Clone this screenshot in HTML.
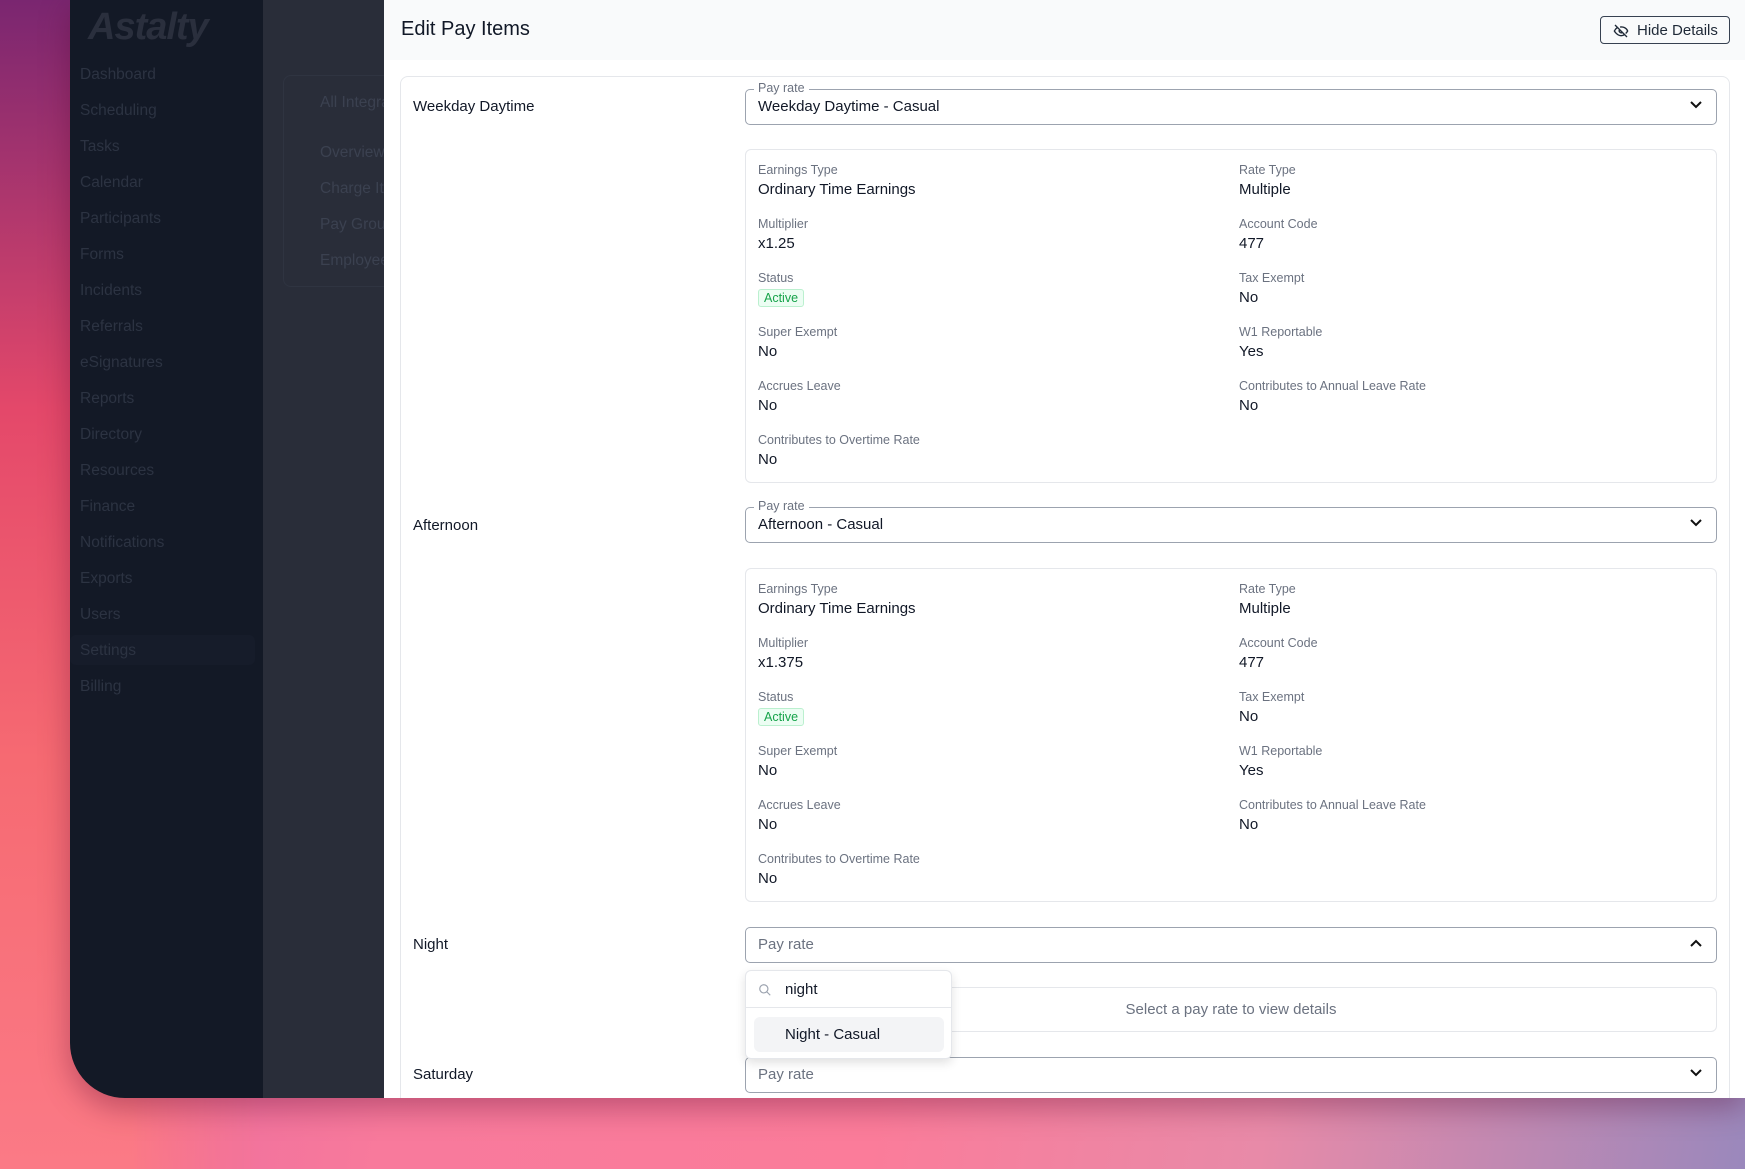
<!DOCTYPE html>
<html><head><meta charset="utf-8"><style>
*{box-sizing:border-box;margin:0;padding:0}
body{width:1745px;height:1169px;overflow:hidden;position:relative;font-family:"Liberation Sans",sans-serif;
background:linear-gradient(100deg,#e060a0 0%,#f87a9c 30%,#fb7c9a 55%,#e88aa8 75%,#9a88bc 100%)}
.bgl{position:absolute;left:0;top:0;width:260px;height:1169px;background:linear-gradient(180deg,#7a2670 0%,#e4486a 35%,#f66a72 65%,#fb7a86 100%);-webkit-mask-image:linear-gradient(to right,#000 50%,transparent);mask-image:linear-gradient(to right,#000 50%,transparent)}
.frame{position:absolute;left:70px;top:0;width:1675px;height:1098px;border-bottom-left-radius:55px;overflow:hidden;background:#131926;box-shadow:0 10px 30px rgba(80,0,40,.35)}
.sec{position:absolute;left:193px;top:0;width:121px;height:1098px;background:#292d39}
.nav{position:absolute;left:10px;color:#2c3342;font-size:15.5px}
.logo{position:absolute;left:18px;top:6px;font-size:38px;font-weight:bold;color:#2a2f3d;letter-spacing:-1px;font-style:italic}
.panel{position:absolute;left:384px;top:0;width:1361px;height:1098px;background:#fff;overflow:hidden}
.hdr{position:absolute;left:0;top:0;width:100%;height:60px;background:#f9fafb}
.title{position:absolute;left:17px;top:18px;font-size:20px;color:#111827}
.btn{position:absolute;left:1216px;top:16px;width:130px;height:28px;border:1px solid #374151;border-radius:4px;font-size:15px;color:#1f2937;padding:5px 0 0 36px}
.card{position:absolute;left:16px;top:76px;width:1330px;height:1040px;border:1px solid #e5e7eb;border-radius:8px}
.lbl{position:absolute;left:413px;font-size:15px;color:#111827}
.sel{position:absolute;left:745px;width:972px;height:36px;border:1px solid #9ca3af;border-radius:5px;font-size:15px;color:#111827;padding:8px 0 0 12px}
.sel .leg{position:absolute;left:8px;top:-9px;background:#fff;padding:0 4px;font-size:12.5px;color:#6b7280}
.ph{color:#6b7280}
.chev{position:absolute;right:14px;top:11px}
.det{position:absolute;left:745px;width:972px;border:1px solid #e5e7eb;border-radius:6px}
.f{position:absolute;font-size:12.5px;color:#6b7280}
.f div{font-size:15px;color:#111827;margin-top:4px}
.badge{display:inline-block;font-size:12.5px !important;color:#16a34a !important;background:#ecfdf3;border:1px solid #bbf0cf;border-radius:3px;padding:1px 5px}
.dd{position:absolute;left:745px;top:970px;width:207px;height:89px;background:#fff;border:1px solid #e5e7eb;border-radius:6px;box-shadow:0 4px 10px rgba(0,0,0,.12)}
</style></head><body>
<div class="bgl"></div>
<div class="frame">
<div class="logo">Astalty</div>
<div class="sec"></div>
<div class="nav" style="top:66px">Dashboard</div>
<div class="nav" style="top:102px">Scheduling</div>
<div class="nav" style="top:138px">Tasks</div>
<div class="nav" style="top:174px">Calendar</div>
<div class="nav" style="top:210px">Participants</div>
<div class="nav" style="top:246px">Forms</div>
<div class="nav" style="top:282px">Incidents</div>
<div class="nav" style="top:318px">Referrals</div>
<div class="nav" style="top:354px">eSignatures</div>
<div class="nav" style="top:390px">Reports</div>
<div class="nav" style="top:426px">Directory</div>
<div class="nav" style="top:462px">Resources</div>
<div class="nav" style="top:498px">Finance</div>
<div class="nav" style="top:534px">Notifications</div>
<div class="nav" style="top:570px">Exports</div>
<div class="nav" style="top:606px">Users</div>
<div style="position:absolute;left:0;top:635px;width:185px;height:30px;background:#161c2a;border-radius:6px"></div>
<div class="nav" style="top:642px">Settings</div>
<div class="nav" style="top:678px">Billing</div>
<div style="position:absolute;left:213px;top:75px;width:110px;height:212px;border:1px solid #2f3441;border-radius:8px"></div>
<div class="nav" style="left:250px;top:94px;color:#3b4150">All Integra</div>
<div class="nav" style="left:250px;top:144px;color:#3b4150">Overview</div>
<div class="nav" style="left:250px;top:180px;color:#3b4150">Charge Ite</div>
<div class="nav" style="left:250px;top:216px;color:#3b4150">Pay Group</div>
<div class="nav" style="left:250px;top:252px;color:#3b4150">Employee</div>
</div>
<div class="panel">
<div class="hdr"><div class="title">Edit Pay Items</div>
<div class="btn"><svg style="position:absolute;left:12px;top:6px" width="16" height="16" viewBox="0 0 24 24" fill="none" stroke="#1f2937" stroke-width="2"><path d="M3 3l18 18M10.6 6.1A10 10 0 0 1 22 12a15 15 0 0 1-3 3.7M6.6 6.6A15 15 0 0 0 2 12s4 7 10 7a9 9 0 0 0 5.4-1.6M9.9 9.9a3 3 0 0 0 4.2 4.2"/></svg>Hide Details</div></div>
<div class="card"></div>
</div>
<svg width="0" height="0" style="position:absolute"><defs><path id="cd" d="M1 1l5 5 5-5" fill="none" stroke="#111" stroke-width="2"/></defs></svg>

<div class="lbl" style="top:98px">Weekday Daytime</div>
<div class="sel" style="top:89px"><span class="leg">Pay rate</span>Weekday Daytime - Casual<svg class="chev" width="12" height="8"><use href="#cd"/></svg></div>
<div class="det" style="top:149px;height:334px">
<div class="f" style="left:12px;top:13px">Earnings Type<div>Ordinary Time Earnings</div></div>
<div class="f" style="left:493px;top:13px">Rate Type<div>Multiple</div></div>
<div class="f" style="left:12px;top:67px">Multiplier<div>x1.25</div></div>
<div class="f" style="left:493px;top:67px">Account Code<div>477</div></div>
<div class="f" style="left:12px;top:121px">Status<div><span class="badge">Active</span></div></div>
<div class="f" style="left:493px;top:121px">Tax Exempt<div>No</div></div>
<div class="f" style="left:12px;top:175px">Super Exempt<div>No</div></div>
<div class="f" style="left:493px;top:175px">W1 Reportable<div>Yes</div></div>
<div class="f" style="left:12px;top:229px">Accrues Leave<div>No</div></div>
<div class="f" style="left:493px;top:229px">Contributes to Annual Leave Rate<div>No</div></div>
<div class="f" style="left:12px;top:283px">Contributes to Overtime Rate<div>No</div></div>
</div>

<div class="lbl" style="top:517px">Afternoon</div>
<div class="sel" style="top:507px"><span class="leg">Pay rate</span>Afternoon - Casual<svg class="chev" width="12" height="8"><use href="#cd"/></svg></div>
<div class="det" style="top:568px;height:334px">
<div class="f" style="left:12px;top:13px">Earnings Type<div>Ordinary Time Earnings</div></div>
<div class="f" style="left:493px;top:13px">Rate Type<div>Multiple</div></div>
<div class="f" style="left:12px;top:67px">Multiplier<div>x1.375</div></div>
<div class="f" style="left:493px;top:67px">Account Code<div>477</div></div>
<div class="f" style="left:12px;top:121px">Status<div><span class="badge">Active</span></div></div>
<div class="f" style="left:493px;top:121px">Tax Exempt<div>No</div></div>
<div class="f" style="left:12px;top:175px">Super Exempt<div>No</div></div>
<div class="f" style="left:493px;top:175px">W1 Reportable<div>Yes</div></div>
<div class="f" style="left:12px;top:229px">Accrues Leave<div>No</div></div>
<div class="f" style="left:493px;top:229px">Contributes to Annual Leave Rate<div>No</div></div>
<div class="f" style="left:12px;top:283px">Contributes to Overtime Rate<div>No</div></div>
</div>

<div class="lbl" style="top:936px">Night</div>
<div class="sel" style="top:927px"><span class="ph">Pay rate</span><svg class="chev" width="12" height="8"><path d="M1 7l5-5 5 5" fill="none" stroke="#111" stroke-width="2"/></svg></div>
<div class="det" style="top:987px;height:45px;text-align:center;font-size:15px;color:#6b7280;padding-top:13px">Select a pay rate to view details</div>

<div class="lbl" style="top:1066px">Saturday</div>
<div class="sel" style="top:1057px"><span class="ph">Pay rate</span><svg class="chev" width="12" height="8"><use href="#cd"/></svg></div>

<div class="dd">
<svg style="position:absolute;left:12px;top:12px" width="14" height="14" viewBox="0 0 24 24" fill="none" stroke="#9ca3af" stroke-width="2"><circle cx="10" cy="10" r="7"/><path d="M15 15l6 6"/></svg>
<div style="position:absolute;left:39px;top:10px;font-size:15px;color:#111827">night</div>
<div style="position:absolute;left:0;top:36px;width:100%;border-top:1px solid #e5e7eb"></div>
<div style="position:absolute;left:8px;top:46px;width:190px;height:35px;background:#f3f4f6;border-radius:6px;font-size:15px;color:#111827;padding:9px 0 0 31px">Night - Casual</div>
</div>
</body></html>
